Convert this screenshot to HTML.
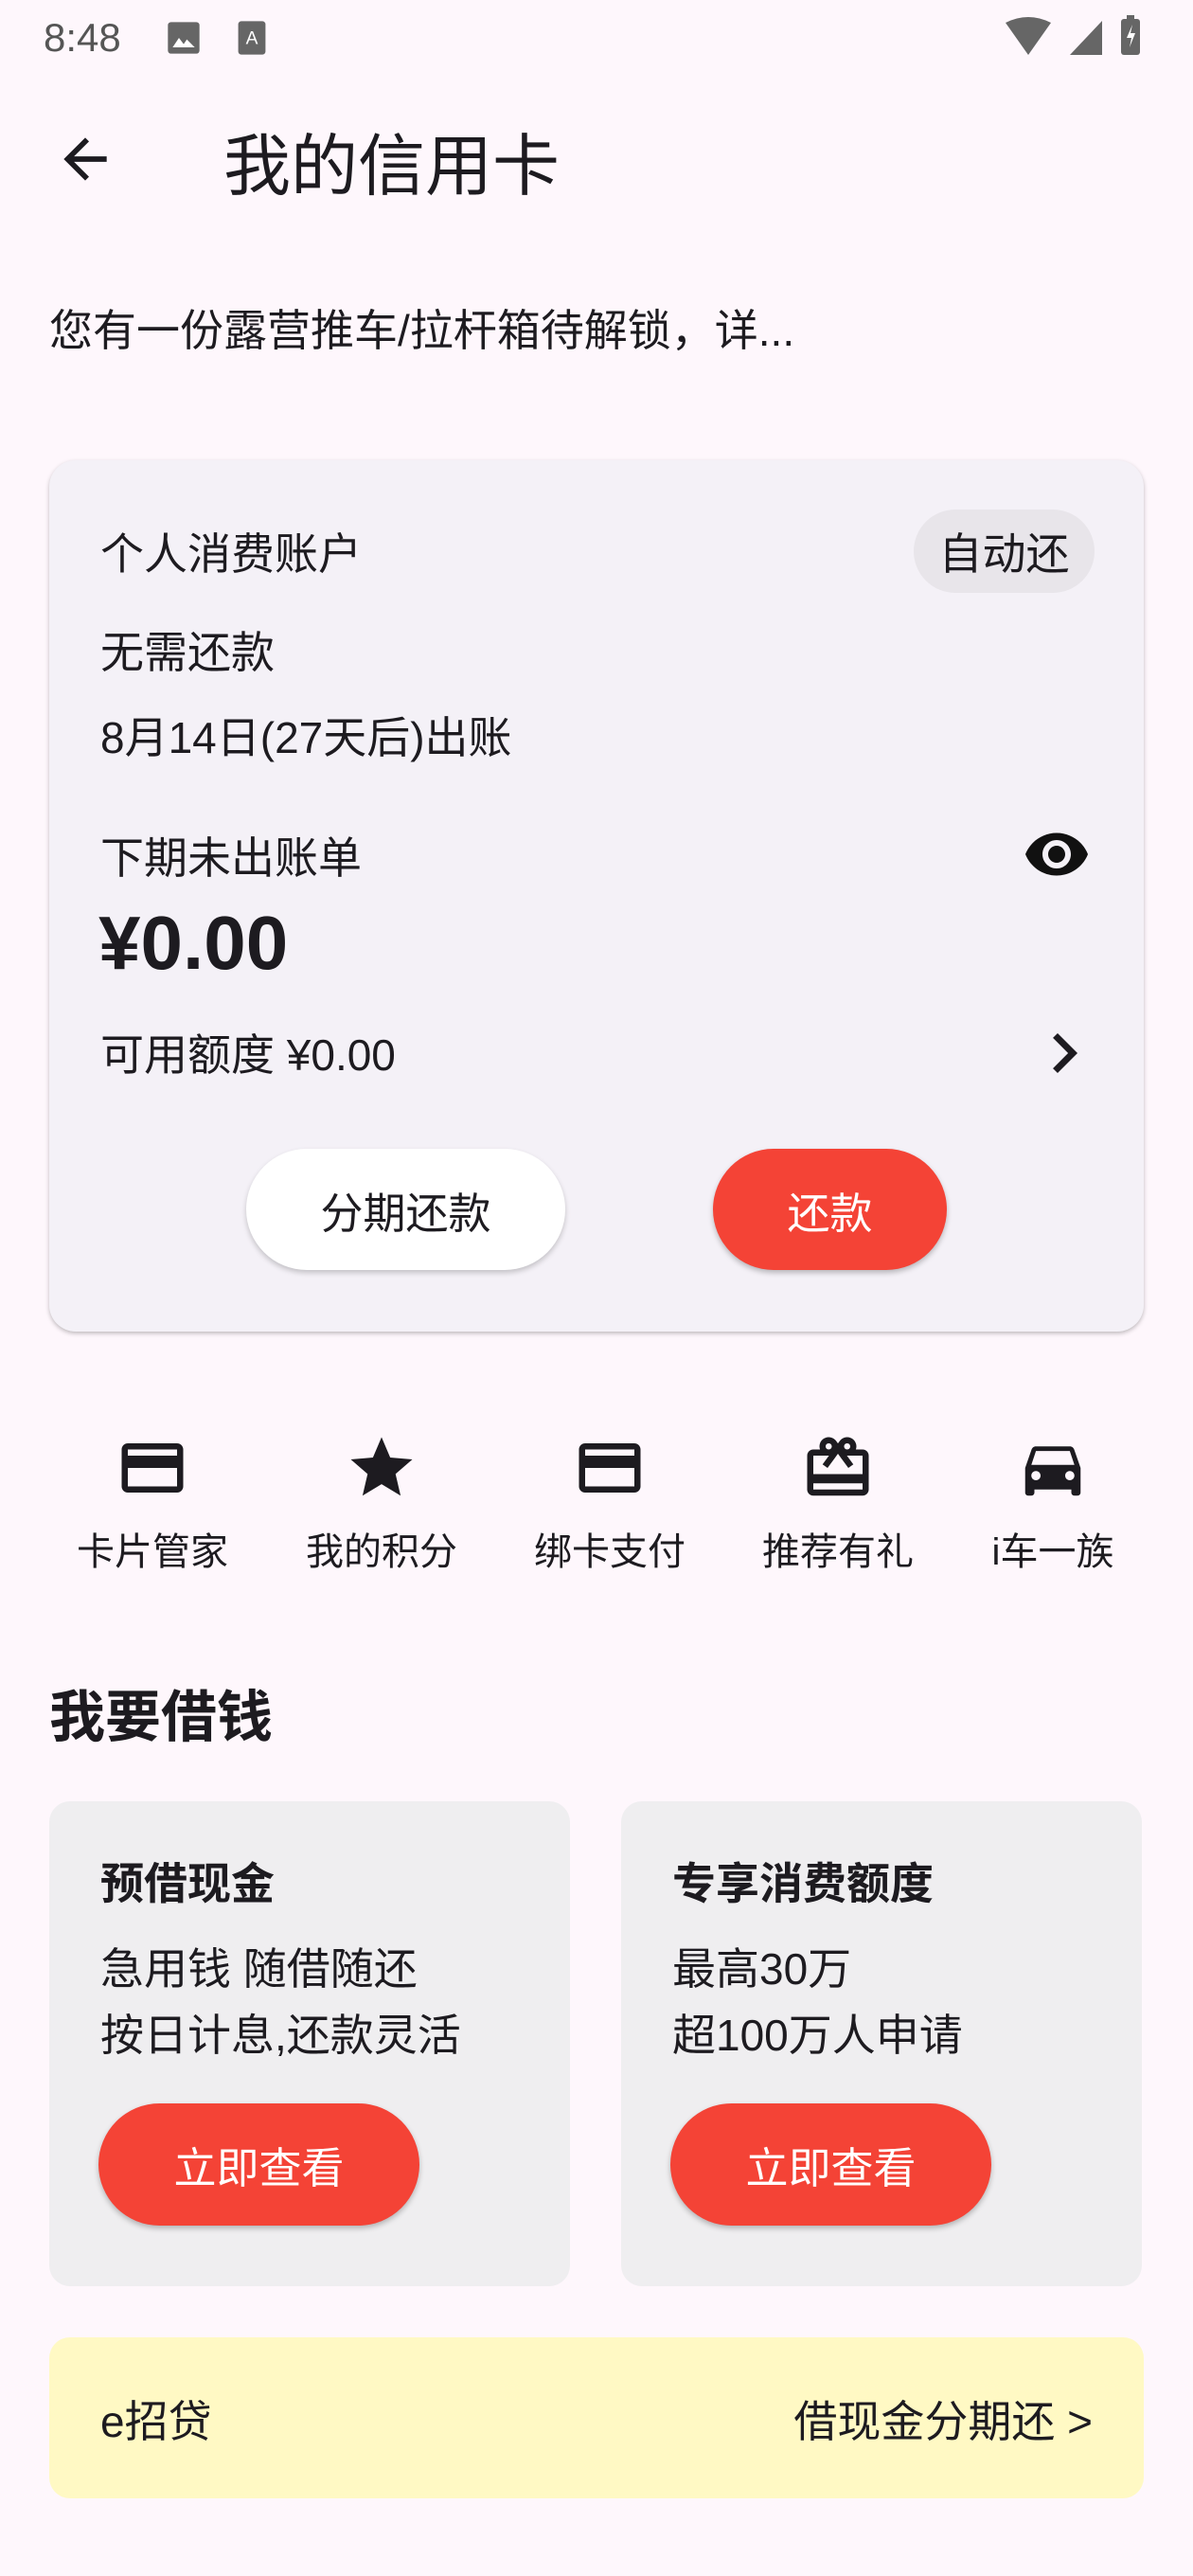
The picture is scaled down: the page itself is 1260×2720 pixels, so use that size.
<!DOCTYPE html>
<html><head><meta charset="utf-8"><style>
*{margin:0;padding:0;box-sizing:border-box}
body{width:1260px;height:2720px;background:#fef7fc;font-family:"Liberation Sans","Noto Sans CJK SC",sans-serif;color:#1d1b20;position:relative;overflow:hidden}
.a{position:absolute;white-space:nowrap}
.t{font-size:46px;line-height:1;transform:translateY(-46%)}
.card{position:absolute;left:52px;top:486px;width:1156px;height:920px;background:#f4f1f7;border-radius:28px;box-shadow:0 2px 5px rgba(0,0,0,.25)}
.btn{position:absolute;border-radius:70px;display:flex;align-items:center;justify-content:center;font-size:45px}
.red{background:#f44336;color:#fff;box-shadow:0 3px 6px rgba(0,0,0,.25)}
.loan{position:absolute;top:1902px;width:550px;height:512px;background:#efeef0;border-radius:22px}
.ic{position:absolute;top:1511px}
.lb{position:absolute;top:1635px;font-size:40px;transform:translate(-50%,-50%);white-space:nowrap}
</style></head><body>
<div class="a" style="left:46px;top:40px;font-size:42px;color:#555;transform:translateY(-50%)">8:48</div>
<svg class="a" style="left:174px;top:20px" width="40" height="40" viewBox="0 0 24 24"><rect x="2" y="2" width="20" height="20" rx="2" fill="#666"/><path d="M5 18l4-6 3 4 2-3 5 5z" fill="#fff"/></svg>
<svg class="a" style="left:250px;top:20px" width="32" height="40" viewBox="0 0 20 24"><rect x="1" y="1" width="18" height="22" rx="2" fill="#666"/><text x="10" y="16" font-size="12" fill="#fff" text-anchor="middle" font-family="Liberation Sans">A</text></svg>
<svg class="a" style="left:1060px;top:16px" width="160" height="44" viewBox="0 0 160 44"><path d="M2 8 Q26 -4 50 8 L26 42z" fill="#666"/><path d="M104 6 L104 42 L70 42z" fill="#666"/><rect x="124" y="4" width="20" height="38" rx="3" fill="#666"/><rect x="130" y="0" width="8" height="5" fill="#666"/><path d="M136 10 l-6 14 h5 l-2 10 6-15 h-5z" fill="#fff"/></svg>
<svg class="a" style="left:56px;top:134px" width="68" height="68" viewBox="0 0 24 24"><path d="M20 11H7.83l5.59-5.59L12 4l-8 8 8 8 1.41-1.41L7.83 13H20v-2z" fill="#1d1b20"/></svg>
<div class="a" style="left:236px;top:170px;font-size:71px;transform:translateY(-50%)">我的信用卡</div>
<div class="a t" style="left:52px;top:347px">您有一份露营推车/拉杆箱待解锁，详...</div>
<div class="card"></div>
<div class="a t" style="left:106px;top:583px">个人消费账户</div>
<div class="btn" style="left:965px;top:538px;width:191px;height:88px;background:#e8e5ea;font-size:46px">自动还</div>
<div class="a t" style="left:106px;top:687px">无需还款</div>
<div class="a t" style="left:106px;top:777px">8月14日(27天后)出账</div>
<div class="a t" style="left:106px;top:904px">下期未出账单</div>
<svg class="a" style="left:1080px;top:866px" width="72" height="72" viewBox="0 0 24 24"><path d="M12 4.5C7 4.5 2.73 7.61 1 12c1.73 4.39 6 7.5 11 7.5s9.27-3.11 11-7.5c-1.73-4.39-6-7.5-11-7.5zM12 17c-2.76 0-5-2.24-5-5s2.24-5 5-5 5 2.24 5 5-2.24 5-5 5zm0-8c-1.66 0-3 1.34-3 3s1.34 3 3 3 3-1.34 3-3-1.34-3-3-3z" fill="#111"/></svg>
<div class="a" style="left:104px;top:996px;font-size:80px;font-weight:bold;transform:translateY(-50%)">¥0.00</div>
<div class="a t" style="left:106px;top:1112px">可用额度 ¥0.00</div>
<svg class="a" style="left:1082px;top:1070px" width="84" height="84" viewBox="0 0 24 24"><path d="M10 6L8.59 7.41 13.17 12l-4.58 4.59L10 18l6-6z" fill="#1d1b20"/></svg>
<div class="btn" style="left:260px;top:1213px;width:337px;height:128px;background:#fff;box-shadow:0 3px 6px rgba(0,0,0,.2)">分期还款</div>
<div class="btn red" style="left:753px;top:1213px;width:247px;height:128px">还款</div>

<svg class="ic" style="left:122px" width="78" height="78" viewBox="0 0 24 24"><path d="M20 4H4c-1.11 0-2 .89-2 2v12c0 1.11.89 2 2 2h16c1.11 0 2-.89 2-2V6c0-1.11-.89-2-2-2zm0 14H4v-6h16v6zm0-10H4V6h16v2z" fill="#1d1b20"/></svg>
<svg class="ic" style="left:364px" width="78" height="78" viewBox="0 0 24 24"><path d="M12 17.27L18.18 21l-1.64-7.03L22 9.24l-7.19-.61L12 2 9.19 8.63 2 9.24l5.46 4.73L5.82 21z" fill="#1d1b20"/></svg>
<svg class="ic" style="left:605px" width="78" height="78" viewBox="0 0 24 24"><path d="M20 4H4c-1.11 0-2 .89-2 2v12c0 1.11.89 2 2 2h16c1.11 0 2-.89 2-2V6c0-1.11-.89-2-2-2zm0 14H4v-6h16v6zm0-10H4V6h16v2z" fill="#1d1b20"/></svg>
<svg class="ic" style="left:846px" width="78" height="78" viewBox="0 0 24 24"><path d="M20 6h-2.18c.11-.31.18-.65.18-1 0-1.66-1.34-3-3-3-1.05 0-1.960.54-2.5 1.35l-.5.67-.5-.68C10.96 2.54 10.05 2 9 2 7.34 2 6 3.34 6 5c0 .35.07.69.18 1H4c-1.11 0-1.99.89-1.99 2L2 19c0 1.11.89 2 2 2h16c1.11 0 2-.89 2-2V8c0-1.11-.89-2-2-2zm-5-2c.55 0 1 .45 1 1s-.45 1-1 1-1-.45-1-1 .45-1 1-1zM9 4c.55 0 1 .45 1 1s-.45 1-1 1-1-.45-1-1 .45-1 1-1zm11 15H4v-2h16v2zm0-5H4V8h5.08L7 10.83 8.62 12 11 8.760l1-1.36 1 1.36L15.38 12 17 10.83 14.92 8H20v6z" fill="#1d1b20"/></svg>
<svg class="ic" style="left:1073px" width="78" height="78" viewBox="0 0 24 24"><path d="M18.92 6.01C18.72 5.42 18.16 5 17.5 5h-11c-.66 0-1.21.42-1.42 1.01L3 12v8c0 .55.45 1 1 1h1c.55 0 1-.45 1-1v-1h12v1c0 .55.45 1 1 1h1c.55 0 1-.45 1-1v-8l-2.08-5.99zM6.5 16c-.83 0-1.5-.67-1.5-1.5S5.67 13 6.5 13s1.5.67 1.5 1.5S7.33 16 6.5 16zm11 0c-.83 0-1.5-.67-1.5-1.5s.67-1.5 1.5-1.5 1.5.67 1.5 1.5-.67 1.5-1.5 1.5zM5 11l1.5-4.5h11L19 11H5z" fill="#1d1b20"/></svg>
<div class="lb" style="left:161px">卡片管家</div>
<div class="lb" style="left:403px">我的积分</div>
<div class="lb" style="left:644px">绑卡支付</div>
<div class="lb" style="left:885px">推荐有礼</div>
<div class="lb" style="left:1112px">i车一族</div>

<div class="a" style="left:52px;top:1808px;font-size:59px;font-weight:bold;transform:translateY(-50%)">我要借钱</div>
<div class="loan" style="left:52px"></div>
<div class="loan" style="left:656px"></div>
<div class="a t" style="left:106px;top:1987px;font-weight:bold">预借现金</div>
<div class="a t" style="left:106px;top:2077px">急用钱 随借随还</div>
<div class="a t" style="left:106px;top:2147px">按日计息,还款灵活</div>
<div class="btn red" style="left:104px;top:2221px;width:339px;height:129px">立即查看</div>
<div class="a t" style="left:710px;top:1987px;font-weight:bold">专享消费额度</div>
<div class="a t" style="left:710px;top:2077px">最高30万</div>
<div class="a t" style="left:710px;top:2147px">超100万人申请</div>
<div class="btn red" style="left:708px;top:2221px;width:339px;height:129px">立即查看</div>

<div class="a" style="left:52px;top:2468px;width:1156px;height:170px;background:#fff9c4;border-radius:22px"></div>
<div class="a t" style="left:106px;top:2555px">e招贷</div>
<div class="a t" style="right:106px;top:2555px">借现金分期还 &gt;</div>
</body></html>
